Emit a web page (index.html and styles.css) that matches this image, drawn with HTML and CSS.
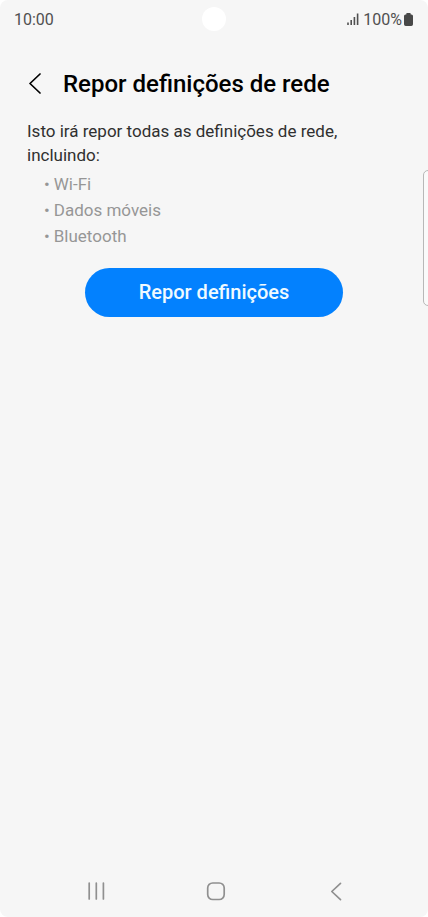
FILE: index.html
```html
<!DOCTYPE html>
<html lang="pt">
<head>
<meta charset="utf-8">
<meta name="viewport" content="width=device-width, initial-scale=1">
<title>Repor definições de rede</title>
<link rel="stylesheet" href="styles.css">
</head>
<body>
<div class="screen">
  <div class="status">
    <time>10:00</time>
    <span class="camera"></span>
    <div class="indicators">
      <svg class="signal" width="12" height="12" viewBox="0 0 12 12" aria-hidden="true"><path d="M1 9.5V12M4.2 7V12M7.4 4V12M10.6 0.5V12"/></svg>
      <span>100%</span>
      <svg class="battery" width="9" height="13" viewBox="0 0 9 13" aria-hidden="true"><path d="M3 0h3q.7 0 .7.7V1.500h.8Q9 1.500 9 3v8.300Q9 13 7.300 13H1.700Q0 13 0 11.300V3Q0 1.500 1.500 1.500h.8V.7Q2.300 0 3 0z"/></svg>
    </div>
  </div>
  <header class="header">
    <button class="icon-button" type="button" aria-label="Voltar">
      <svg width="12" height="22" viewBox="0 0 12 22"><path d="M11 1L1 10.500L11 20"/></svg>
    </button>
    <h1>Repor definições de rede</h1>
  </header>
  <main class="content">
    <p>Isto irá repor todas as definições de rede, incluindo:</p>
    <ul>
      <li>Wi-Fi</li>
      <li>Dados móveis</li>
      <li>Bluetooth</li>
    </ul>
    <button class="reset" type="button">Repor definições</button>
  </main>
  <nav class="navbar">
    <button class="icon-button" type="button" aria-label="Recentes">
      <svg width="20" height="20" viewBox="0 0 20 20"><path d="M3.200 2V18M10.300 2V18M17.400 2V18"/></svg>
    </button>
    <button class="icon-button" type="button" aria-label="Início">
      <svg width="20" height="20" viewBox="0 0 20 20"><rect x="1.700" y="2" width="16.500" height="16.500" rx="5"/></svg>
    </button>
    <button class="icon-button" type="button" aria-label="Retroceder">
      <svg width="20" height="20" viewBox="0 0 20 20"><path d="M14.500 2.300L5.800 10.500L14.500 18.700"/></svg>
    </button>
  </nav>
  <span class="edge-handle"></span>
</div>
</body>
</html>
```

FILE: styles.css
```css
* {
  box-sizing: border-box;
}

body {
  margin: 0;
  background: #fff;
  color: #303030;
  font-family: Roboto, "Liberation Sans", sans-serif;
}

.screen {
  position: relative;
  display: flex;
  flex-direction: column;
  min-height: 100vh;
  overflow: hidden;
  border-radius: 8px;
  background: #f6f6f6;
}

.status {
  display: grid;
  grid-template-columns: 1fr 24px 1fr;
  align-items: center;
  height: 38px;
  padding: 0 15px 0 14px;
  color: #505050;
  font-size: 16px;
}

.camera {
  width: 24px;
  height: 24px;
  border-radius: 50%;
  background: #fff;
}

.indicators {
  display: flex;
  align-items: center;
  justify-content: flex-end;
  gap: 4px;
}

.signal {
  fill: none;
  stroke: #505050;
  stroke-width: 1.6;
}

.battery {
  margin-left: -2px;
  fill: #484848;
}

.header {
  display: flex;
  align-items: center;
  gap: 22px;
  height: 36px;
  margin-top: 28px;
  padding: 0 29px;
  color: #000;
}

h1 {
  margin: 0;
  font-size: 24px;
  font-weight: 500;
  line-height: 36px;
}

.icon-button {
  display: flex;
  padding: 0;
  border: 0;
  background: none;
  color: inherit;
}

.icon-button svg {
  fill: none;
  stroke: currentColor;
  stroke-width: 1.7;
  stroke-linecap: round;
  stroke-linejoin: round;
}

.content {
  display: flex;
  flex: 1;
  flex-direction: column;
  padding: 17px 27px 0;
}

p {
  margin: 0;
  font-size: 17px;
  line-height: 24px;
}

ul {
  margin: 4px 0 0;
  padding: 0 0 0 17px;
  color: #969696;
  font-size: 17px;
  line-height: 26px;
  list-style: none;
}

li {
  display: flex;
  gap: 4px;
}

li::before {
  content: "•";
}

.reset {
  align-self: center;
  padding: 12px 54px 13px;
  margin-top: 19px;
  border: 0;
  border-radius: 25px;
  background: #0381fe;
  color: #f0faff;
  font: 500 20px/24px Roboto, "Liberation Sans", sans-serif;
}

.navbar {
  display: flex;
  align-items: center;
  justify-content: center;
  gap: 100px;
  height: 52px;
  padding-left: 4px;
  color: #909090;
}

.edge-handle {
  position: absolute;
  top: 170px;
  right: -7px;
  width: 12px;
  height: 136px;
  border: 1px solid #b8b8b8;
  border-radius: 5px;
  background: #fafafa;
}
```
